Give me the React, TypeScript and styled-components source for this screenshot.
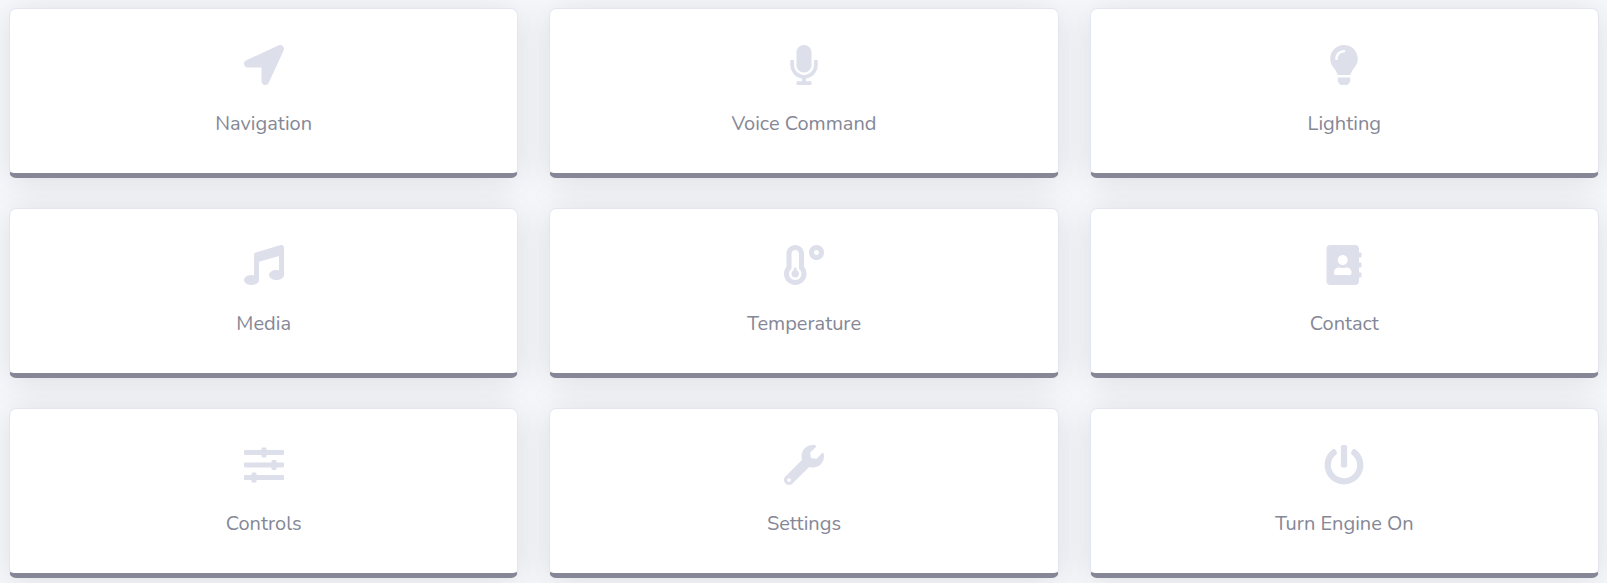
import React from "react";
import styled, { createGlobalStyle } from "styled-components";
import type { IconType } from "react-icons";
import {
  FaLocationArrow,
  FaMicrophone,
  FaLightbulb,
  FaMusic,
  FaTemperatureLow,
  FaAddressBook,
  FaSlidersH,
  FaWrench,
  FaPowerOff,
} from "react-icons/fa";

const GlobalStyle = createGlobalStyle`
  *, *::before, *::after { box-sizing: border-box; }
  body {
    margin: 0;
    background: #f8f9fc;
    color: #858796;
    font-family: Nunito, Lato, "Open Sans", sans-serif;
  }
`;

const Grid = styled.main`
  display: grid;
  grid-template-columns: repeat(3, minmax(0, 1fr));
  gap: 30px 31px;
  padding: 8px 8px 5px 9px;
`;

const Card = styled.button`
  display: flex;
  flex-direction: column;
  align-items: center;
  gap: 27px;
  padding: 36px 20px 37px;
  background: #fff;
  border: 1px solid #e3e6f0;
  border-bottom: 5px solid #858796;
  border-radius: 7px;
  box-shadow: 0 3px 35px rgba(58, 59, 69, 0.15);
  color: inherit;
  font: inherit;
  cursor: pointer;
`;

const CardIcon = styled.span`
  display: flex;
  color: #dddfeb;
  font-size: 40px;
`;

const CardLabel = styled.span`
  font-size: 20px;
  line-height: 24px;
`;

interface Item {
  label: string;
  icon: IconType;
}

const items: Item[] = [
  { label: "Navigation", icon: FaLocationArrow },
  { label: "Voice Command", icon: FaMicrophone },
  { label: "Lighting", icon: FaLightbulb },
  { label: "Media", icon: FaMusic },
  { label: "Temperature", icon: FaTemperatureLow },
  { label: "Contact", icon: FaAddressBook },
  { label: "Controls", icon: FaSlidersH },
  { label: "Settings", icon: FaWrench },
  { label: "Turn Engine On", icon: FaPowerOff },
];

export default function App() {
  return (
    <>
      <GlobalStyle />
      <Grid>
        {items.map(({ label, icon: Icon }) => (
          <Card key={label} type="button">
            <CardIcon>
              <Icon aria-hidden />
            </CardIcon>
            <CardLabel>{label}</CardLabel>
          </Card>
        ))}
      </Grid>
    </>
  );
}
